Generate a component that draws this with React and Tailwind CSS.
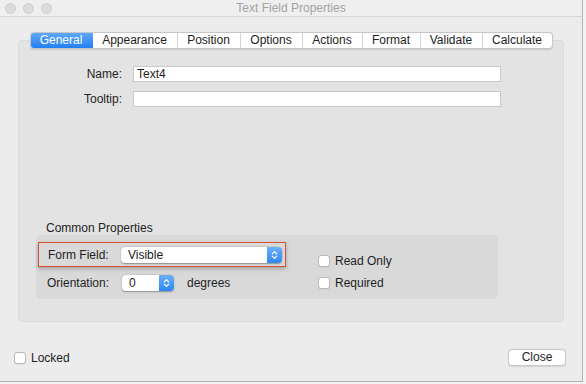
import React from "react";

const tabs = [
  { label: "General", w: "w-[63px]" },
  { label: "Appearance", w: "w-[84px]" },
  { label: "Position", w: "w-[63px]" },
  { label: "Options", w: "w-[62px]" },
  { label: "Actions", w: "w-[60px]" },
  { label: "Format", w: "w-[58px]" },
  { label: "Validate", w: "w-[62px]" },
  { label: "Calculate", w: "w-[70px]" },
];

function Stepper() {
  return (
    <svg width="7" height="10" viewBox="0 0 7 10" fill="none" stroke="white" strokeWidth="1.2" strokeLinecap="round" strokeLinejoin="round">
      <path d="M1.3 3.8 L3.5 1.6 L5.7 3.8" />
      <path d="M1.3 6.2 L3.5 8.4 L5.7 6.2" />
    </svg>
  );
}

function Popup({ value, width }) {
  return (
    <div className={`${width} h-[16px] flex bg-white rounded-[4px] shadow-[0_0.5px_1.5px_rgba(0,0,0,0.35)]`}>
      <div className="flex-1 pl-[7px] leading-[16px] text-[#1b1b1b]">{value}</div>
      <div className="w-[15px] h-full rounded-r-[4px] bg-linear-to-b from-[#6bb0f8] to-[#2b86f4] flex items-center justify-center">
        <Stepper />
      </div>
    </div>
  );
}

function Check({ label }) {
  return (
    <div className="flex items-center h-[12px]">
      <div className="w-[12px] h-[12px] bg-white border border-[#b9b9b9] rounded-[3px] shadow-[0_0.5px_0.5px_rgba(0,0,0,0.08)]" />
      <span className="ml-[5px] leading-[14px] text-[#1e1e1e]">{label}</span>
    </div>
  );
}

export default function App() {
  return (
    <div className="w-[586px] h-[384px] bg-[#f3f3f3] overflow-hidden font-['Liberation_Sans',Arial,sans-serif] text-[12px] text-[#1e1e1e]">
      <div className="w-[583px] h-[382px] bg-[#ececec] border-r border-b border-[#b4b4b4] flex flex-col">
        {/* title bar */}
        <div className="h-[17px] grid grid-cols-[1fr_auto_1fr] items-center bg-[#efefef] border-b border-[#d6d6d6]">
          <div className="flex items-center gap-[7px] pl-[5px]">
            <div className="w-[11px] h-[11px] rounded-full bg-[#dcdcdc] border border-[#cdcdcd]" />
            <div className="w-[11px] h-[11px] rounded-full bg-[#dcdcdc] border border-[#cdcdcd]" />
            <div className="w-[11px] h-[11px] rounded-full bg-[#dcdcdc] border border-[#cdcdcd]" />
          </div>
          <div className="text-[#a3a3a3] leading-[16px]">Text Field Properties</div>
          <div />
        </div>

        {/* tabs */}
        <div className="pt-[15px] flex justify-center relative z-10 -mb-[9px]">
          <div className="flex h-[17px] bg-white border border-[#c6c6c6] rounded-[4px] shadow-[0_0.5px_1px_rgba(0,0,0,0.12)] overflow-hidden">
            {tabs.map((t, i) => (
              <div
                key={t.label}
                className={
                  i === 0
                    ? `${t.w} -my-px -ml-px bg-linear-to-b from-[#62aaf8] to-[#1c7cf4] text-white text-center leading-[17px] rounded-l-[4px]`
                    : `${t.w} text-center leading-[15px] ${i > 1 ? "border-l border-[#d3d3d3]" : ""}`
                }
              >
                {t.label}
              </div>
            ))}
          </div>
        </div>

        {/* panel */}
        <div className="mx-[18px] h-[282px] bg-[#e3e3e3] border border-[#dadada] rounded-[4px] pt-[25px] flex flex-col">
          <div className="flex items-center h-[16px]">
            <div className="w-[103px] text-right leading-[16px]">Name:</div>
            <div className="ml-[11px] w-[368px] h-[16px] bg-white border border-[#c9c9c9] pl-[3px] leading-[14px]">Text4</div>
          </div>
          <div className="flex items-center h-[16px] mt-[9px]">
            <div className="w-[103px] text-right leading-[16px]">Tooltip:</div>
            <div className="ml-[11px] w-[368px] h-[16px] bg-white border border-[#c9c9c9]" />
          </div>

          <div className="mt-[114px] ml-[27px] leading-[14px] text-[#222]">Common Properties</div>
          <div className="ml-[17px] w-[462px] h-[64px] bg-[#d9d9d9] rounded-[5px] pt-[7px] pl-[2px] flex">
            <div className="flex flex-col w-[248px]">
              <div className="h-[25px] border-[1.5px] border-[#d4522e] flex items-center pl-[9px] shadow-[0_2px_4px_rgba(0,0,0,0.25)]">
                <div className="w-[73px] leading-[16px]">Form Field:</div>
                <Popup value="Visible" width="w-[161px]" />
              </div>
              <div className="mt-[8px] h-[16px] flex items-center pl-[9px]">
                <div className="w-[75px] leading-[16px]">Orientation:</div>
                <Popup value="0" width="w-[52px]" />
                <div className="ml-[13px] leading-[16px]">degrees</div>
              </div>
            </div>
            <div className="ml-[32px] mt-[13px] flex flex-col gap-[10px]">
              <Check label="Read Only" />
              <Check label="Required" />
            </div>
          </div>
        </div>

        {/* footer */}
        <div className="mt-[27px] h-[17px] flex items-center justify-between pl-[14px] pr-[16px]">
          <Check label="Locked" />
          <div className="w-[58px] h-[17px] bg-white border border-[#c8c8c8] rounded-[4px] text-center leading-[15px] shadow-[0_0.5px_1px_rgba(0,0,0,0.1)]">
            Close
          </div>
        </div>
      </div>
    </div>
  );
}
